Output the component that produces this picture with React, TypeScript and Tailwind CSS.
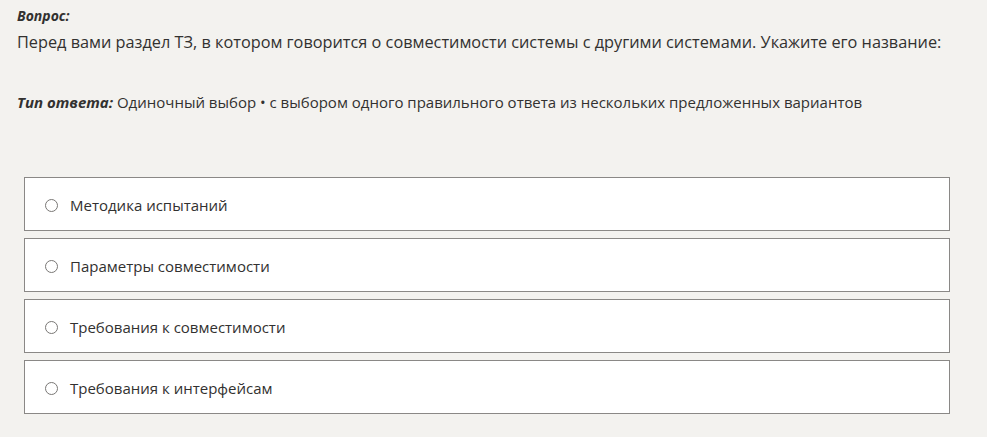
import React from "react";

const options = [
  "Методика испытаний",
  "Параметры совместимости",
  "Требования к совместимости",
  "Требования к интерфейсам",
];

export default function App() {
  return (
    <div
      className="w-[987px] h-[437px] bg-[#f3f2ef] text-[#323130] overflow-hidden"
      style={{ fontFamily: '"Open Sans", "Noto Sans", sans-serif' }}
    >
      <div className="pl-[17px] pt-[6px]">
        <div className="text-[14px] leading-[20px] font-bold italic">Вопрос:</div>
        <div className="mt-[4px] text-[16.3px] leading-[24px]">
          Перед вами раздел ТЗ, в котором говорится о совместимости системы с другими системами. Укажите его название:
        </div>
        <div className="mt-[38px] text-[15px] leading-[21px]">
          <span className="font-bold italic">Тип ответа:</span> Одиночный выбор • с выбором одного правильного ответа из нескольких предложенных вариантов
        </div>
      </div>
      <div className="mt-[64px] ml-[24px] w-[926px] flex flex-col gap-[7px]">
        {options.map((o) => (
          <div
            key={o}
            className="h-[54px] bg-white border border-[#8a8886] flex items-center pl-[20px]"
          >
            <span className="w-[13px] h-[13px] rounded-full border border-[#797775] bg-white shrink-0 mt-[2px]" />
            <span className="ml-[12px] text-[15px] leading-[20px] mt-[2px]">{o}</span>
          </div>
        ))}
      </div>
    </div>
  );
}
